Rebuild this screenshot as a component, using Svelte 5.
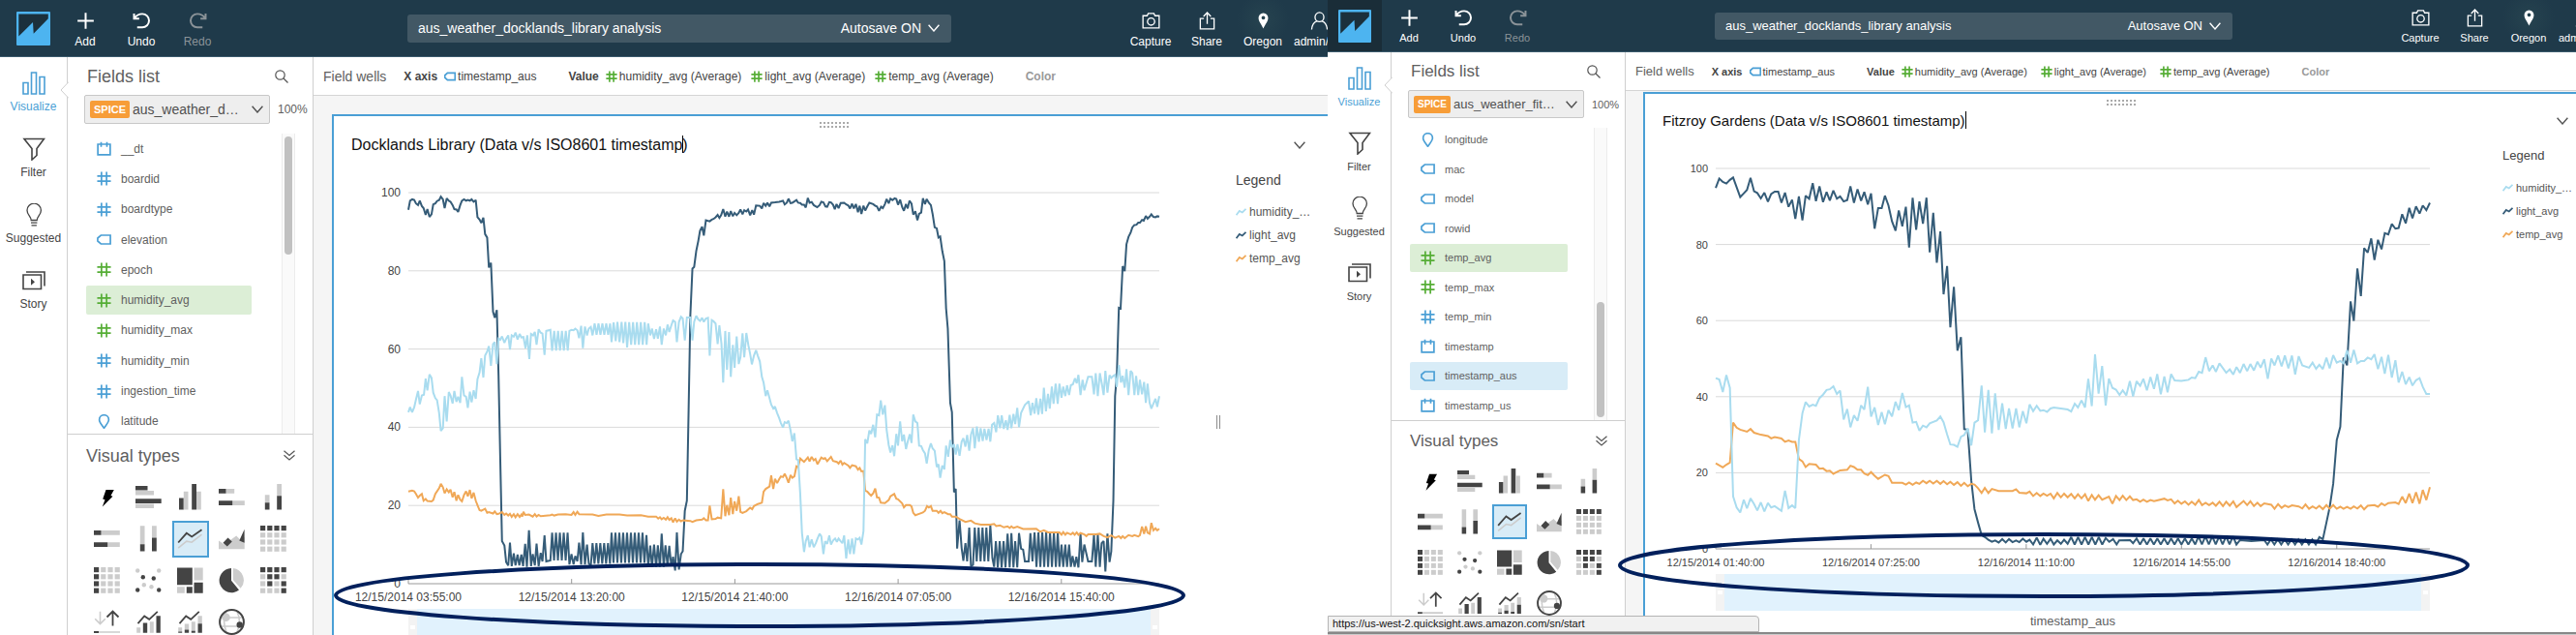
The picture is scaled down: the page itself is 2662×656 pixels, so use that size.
<script>
  // Builds a run of alternating high and low samples at a steady interval.
  function zig(from, to, high, low, step) {
    const out = [];
    let up = true;
    for (let x = from; x <= to; x += step) {
      out.push(`${x.toFixed(1)},${up ? high : low}`);
      up = !up;
    }
    return out.join(' ');
  }

  // Moves a run of samples along the time axis.
  function shift(dx, run) {
    return run
      .trim()
      .split(/\s+/)
      .map((p) => {
        const [x, y] = p.split(',').map(Number);
        return `${x + dx},${y}`;
      })
      .join(' ');
  }

  const docklandsLight = [
    '257,308 262,281 268,277 274,279 279,289 285,294 290,281 296,297 301,303 307,323 312,306 318,329 324,321 329,292 335,289 340,282 346,279 351,269 357,277 362,303 368,274 374,281 379,284 385,294 390,306 396,307 401,314 407,294 412,281 418,277 424,281 429,279 435,281 440,277 446,284 452,279 457,330 463,337 468,347 474,331 479,380 485,390 490,479 496,465 502,610 507,628 513,605 518,800 523,1050 528,1290 535,1303 540,1352 546,1362 551,1294 556,1364 562,1326 567,1362 573,1330 578,1362 584,1330 589,1364 595,1298 600,1366 606,1258 612,1364 617,1328 623,1362 628,1297 634,1364 640,1325 645,1350 651,1273 656,1350 668,1347',
    zig(673, 719, 1265, 1347, 5.6),
    '723,1359 729,1328 735,1359 740,1334 746,1350 751,1294 757,1359 762,1264 768,1359 774,1300 779,1356 785,1362',
    zig(790, 842, 1296, 1357, 5.6),
    zig(845, 942, 1265, 1354, 5.6),
    '946,1272 951,1366 957,1303 962,1366 968,1300 974,1366 979,1302 985,1366 990,1268 996,1366 1001,1302 1007,1364 1012,1304 1018,1364 1023,1336 1029,1377 1034,1264 1040,1374 1046,1328 1051,1320 1057,1200 1063,1170 1068,900 1073,620 1079,482 1084,477 1090,430 1096,400 1101,370 1107,358 1112,384 1118,339 1129,342 1135,337 1140,335 1146,330 1152,323 1157,332 1162,324 1168,306 1174,328 1179,313 1185,328 1190,312 1196,327 1201,317 1207,324 1213,317 1218,307 1224,321 1229,309 1235,313 1240,307 1246,324 1252,309 1257,322 1263,295 1274,296 1280,304 1285,288 1291,296 1296,287 1302,298 1307,287 1318,286 1330,284 1335,283 1341,281 1346,292 1352,287 1357,275 1363,288 1368,287 1374,283 1380,279 1385,287 1391,288 1396,293 1402,293 1407,301 1413,273 1418,287 1424,285 1430,294 1440,300 1447,294 1452,284 1458,286 1464,298 1469,299 1475,285 1480,286 1486,293 1491,306 1496,291 1502,303 1508,288 1518,287 1524,292 1530,295 1535,304 1541,290 1546,304 1552,291 1558,315 1563,296 1568,320',
    shift(
      1484,
      [
        '90,296 95,310 101,298 107,287 118,291 124,296 129,298 135,311 141,299 146,303 152,291 157,276 163,289 168,275 174,279 180,274 185,276 190,293 196,278 202,300 207,311 213,291 218,304 223,281 229,290 234,322 240,312 246,339 251,320 257,316 262,274 268,291 273,276 279,287 285,294 290,320 296,360 302,363 307,390 312,387 318,430 324,460 329,600 334,660 341,880 346,908 352,1145 357,1135 361,1312 368,1228 374,1310 379,1348 385,1296 390,1350 396,1250 401,1364 407,1360',
        zig(412, 455, 1250, 1350, 5.6),
        '457,1243 463,1340 468,1366',
        zig(473, 502, 1290, 1368, 5.6),
        '507,1268 513,1368 518,1266 524,1368 529,1290 535,1368 540,1266 546,1312 552,1315 557,1350 568,1350 573,1266 579,1350',
        zig(585, 653, 1264, 1366, 5.6),
        '657,1366 663,1300 668,1366 674,1300 679,1366 685,1300 690,1366 695,1334 701,1366 706,1336 712,1368 718,1268 723,1352 729,1300 740,1350 751,1350 757,1270 762,1366 768,1270 774,1366 779,1296 785,1290 790,1380 796,1268 802,1352 807,1320 813,1170 818,860 823,800 829,598 834,600 840,475 846,490 851,410 857,388 863,376 868,360 874,353 880,352 885,346 890,346 896,338 901,340 907,326 912,334 918,328 923,321 929,329 935,330 940,327 946,328'
      ].join(' ')
    )
  ].join(' ');

  const docklandsHumidity = [
    '257,908 262,893 268,908 274,893 279,870 285,845 290,884 296,858 302,856 307,808 312,843 318,796 324,806 329,850 335,866 340,872 346,910 351,963 357,955 362,860 368,935 374,848 379,858 385,882 390,845 396,877 401,862 407,880 412,803 418,858 424,862 429,895 435,847 440,878 446,843 452,868 457,810 463,790 468,748 474,805 479,740 485,728 490,712 496,770 502,706 507,700 513,765 518,690 523,693 528,683 535,702 540,690 546,680 551,722 556,680 562,684 567,672 573,692 579,676 584,686 590,685 596,718 601,680 607,750 612,676 618,680 623,670 628,708 634,662 640,672 645,675 651,738 656,667 668,664 673,726',
    zig(679, 720, 667, 725, 5.6),
    '723,667 729,664 735,665 740,660 746,665 751,688 757,652 762,718 768,654 774,680 779,660 785,655 790,680',
    zig(796, 842, 645, 678, 5.6),
    '845,700 851,642 857,697 862,640 868,700 874,640 879,703 885,640 890,716',
    zig(896, 948, 641, 708, 5.6),
    '951,645 957,680 962,660 968,690 974,662 979,690 985,654 990,708 996,660 1002,680 1007,648 1012,670 1018,650 1023,636 1029,640 1034,700 1040,640 1046,625 1051,630 1057,695 1063,627 1073,627 1079,695 1084,640 1090,622 1096,633 1101,637 1107,628 1112,640 1118,630 1124,628 1129,740 1135,635 1140,638 1146,645 1152,706 1157,650 1163,705 1168,820 1174,667 1179,782 1185,670 1190,803 1196,708 1201,776 1207,683 1213,765 1218,745 1224,674 1229,745 1235,673 1241,710 1246,735 1251,766 1257,740 1263,724 1268,740 1274,757 1280,803 1285,820 1291,860 1296,843 1302,866 1307,885 1313,897 1318,891 1324,910 1330,925 1335,940 1341,953 1346,937 1352,940 1357,933 1363,962 1368,994 1374,970 1380,1047 1385,1050 1391,1150 1396,1265 1402,1322 1407,1290 1413,1273 1418,1308 1424,1285 1430,1308 1436,1296 1441,1282 1447,1268 1452,1276 1458,1328 1463,1290 1469,1298 1475,1273 1480,1300',
    shift(
      1484,
      '2,1288 8,1282 13,1292 18,1282 24,1290 29,1296 34,1273 40,1341 46,1285 51,1328 57,1282 62,1328 68,1282 74,1285 79,1280 84,1300 90,1260 95,988 101,1000 107,962 112,972 118,945 124,982 129,915 135,917 140,873 146,915 152,887 157,960 163,1005 168,1027 174,1006 179,1038 185,972 190,1007 196,935 202,994 207,974 213,1017 218,995 224,973 229,999 234,915 240,935 246,940 251,1007 257,1008 262,1020 268,1030 273,1060 279,1020 285,1000 290,1015 296,1022 302,1070 307,1062 312,1102 318,1066 324,1077 329,1007 335,1040 341,990 346,1012 352,1003 357,1033 362,1003 368,1037 374,995 379,985 385,1010 390,975 396,1022 401,975 407,955 412,1015 418,950 424,995 429,955 435,993 440,957 446,990 452,957 457,995 462,945 468,940 474,967 479,917 485,955 490,917 496,957 502,932 507,960 513,916 518,955 524,913 529,943 535,895 540,952 546,910 557,886 568,875 574,917 579,880 585,912 590,866 596,915 602,868 607,913 612,835 618,905 624,853 629,897 635,832 640,883 646,823 652,883 657,823 663,865 668,832 674,860 679,828 685,857 690,828 696,825 702,807 707,822 712,797 718,857 724,812 729,843 740,803 751,803 757,855 762,792 768,860 774,792 780,825 785,857 790,785 796,850 802,798 807,806 813,800 818,797 823,833 829,768 835,820 840,800 846,835 851,780 857,857 863,785 868,792 874,857 879,800 885,857 890,812 896,855 902,818 907,880 912,823 918,880 923,897 935,868 940,892 946,860'
    )
  ].join(' ');

  const docklandsTemp = [
    '257,1143 268,1140 274,1142 279,1150 285,1161 290,1155 296,1150 301,1170 307,1165 312,1171 324,1172 329,1168 335,1150 346,1133 351,1120 357,1130 362,1148 368,1136 374,1145 379,1137 385,1160 390,1144 396,1170 401,1153 407,1167 412,1172 418,1153 424,1142 429,1157 435,1138 440,1163 446,1146 452,1170 457,1183 463,1198 468,1200 479,1194 485,1206 490,1204 502,1208 507,1202 513,1210 518,1209 528,1204 535,1212 540,1208 546,1214 551,1209 556,1218 562,1210 567,1219 573,1210 579,1218 584,1211 587,1217 590,1203 595,1212 606,1211 617,1217 623,1210 628,1217 634,1212 640,1216 668,1213 673,1211 679,1214 690,1211 712,1210 729,1212 735,1204 740,1212 746,1203 751,1210 790,1211 807,1215 830,1211 868,1211 890,1214 930,1213 951,1217 974,1217 980,1223 985,1219 990,1225 996,1221 1002,1226 1007,1219 1012,1227 1018,1222 1023,1234 1029,1222 1034,1232 1040,1226 1046,1231 1052,1228 1073,1230 1079,1233 1090,1228 1107,1226 1112,1222 1118,1228 1124,1228 1129,1185 1135,1225 1146,1224 1152,1220 1162,1222 1168,1136 1174,1216 1179,1183 1185,1213 1190,1161 1196,1210 1201,1172 1207,1200 1213,1157 1218,1203 1224,1206 1235,1201 1246,1191 1252,1195 1257,1186 1268,1180 1280,1176 1285,1143 1291,1135 1302,1128 1307,1095 1313,1135 1318,1105 1324,1118 1330,1106 1335,1098 1341,1100 1346,1090 1352,1103 1357,1117 1363,1094 1368,1102 1374,1098 1380,1068 1385,1070 1391,1045 1402,1055 1413,1042 1418,1053 1424,1040 1430,1050 1435,1046 1441,1062 1452,1042 1458,1046 1463,1044 1469,1053 1480,1040 1486,1052',
    shift(
      1484,
      '13,1055 18,1060 24,1051 29,1063 34,1058 46,1066 51,1073 57,1065 68,1068 74,1078 79,1073 84,1083 90,1082 95,1140 101,1143 107,1150 112,1155 118,1148 124,1134 129,1160 135,1161 140,1176 152,1177 163,1168 168,1157 179,1150 185,1164 190,1166 202,1178 207,1190 213,1183 224,1183 229,1187 234,1206 240,1213 251,1209 262,1205 268,1200 274,1186 279,1190 285,1186 290,1200 302,1200 307,1206 313,1200 318,1207 324,1204 335,1210 341,1210 346,1217 357,1217 368,1224 385,1233 401,1229 412,1237 430,1241 457,1241 468,1239 474,1245 485,1243 496,1249 507,1246 513,1251 518,1246 524,1251 535,1247 552,1254 590,1253 601,1262 612,1258 624,1264 657,1264 663,1271 668,1263 674,1271 679,1265 690,1270 696,1265 701,1271 707,1264 712,1271 718,1266 729,1270 735,1275 740,1270 762,1270 774,1268 785,1275 796,1279 807,1273 818,1280 829,1275 835,1281 840,1275 846,1281 857,1272 868,1275 874,1272 885,1276 890,1272 896,1247 902,1268 907,1246 912,1265 918,1268 923,1236 929,1258 935,1252 940,1258 946,1253'
    )
  ].join(' ');

  const fitzroyLight = [
    '278,241 289,213 300,223 311,228 322,217 332,210 354,268 364,258 375,247 386,211 397,251 407,256 418,272 429,255 440,282 450,259 461,252 472,252 482,285 493,255 504,297 515,276 525,333 536,266 547,337 557,264 568,273 579,227 589,280 600,236 611,283 622,253 632,278 643,249 654,273 664,266 675,281 686,277 696,236 707,285 718,245 729,279 739,253 750,290 760,257 771,362 782,301 793,301 803,264 814,293 825,340 836,368 846,308 857,355 868,297 878,418 889,270 900,365 910,281 921,347 932,270 942,432 953,315 964,463 975,370 985,557 996,473 1006,655 1017,535 1028,724 1039,684 1049,957 1060,960 1071,1110 1081,1195 1092,1235 1103,1272 1113,1278 1124,1286 1135,1292 1145,1288 1156,1294 1167,1284 1178,1294 1188,1284 1199,1293 1210,1288 1220,1293 1231,1283 1242,1292 1252,1286 1263,1300 1274,1280 1285,1301 1295,1283 1306,1298 1317,1283 1327,1300 1338,1288 1349,1298 1359,1286 1370,1298',
    zig(1381, 1480, 1278, 1300, 10.7),
    '1488,1281 1499,1292',
    shift(
      1440,
      [
        '71,1284 82,1300',
        '90,1288 124,1287 133,1296',
        zig(144, 330, 1282, 1300, 10.7),
        zig(336, 458, 1276, 1300, 10.7),
        '465,1287 500,1290 540,1287',
        zig(550, 702, 1300, 1285, 10.7),
        '711,1278 722,1284 733,1235 743,1190 754,1120 765,990 776,950 786,745 797,768 808,578 818,636 829,480 840,562 850,420 861,433 872,391 882,455 893,395 904,423 914,375 925,379 936,348 947,362 957,360 968,319 979,346 990,300 1000,331 1011,296 1022,317 1032,293 1043,307 1054,285'
      ].join(' ')
    )
  ].join(' ');

  const fitzroyHumidity = [
    '278,806 289,810 300,847 311,797 322,835 332,1157 343,1190 354,1205 365,1167 375,1193 386,1163 397,1180 407,1199 418,1175 429,1202 440,1177 450,1190 461,1186 482,1200 493,1140 504,1192 515,1184 525,1192 536,990 547,910 557,877 568,890 579,885 589,888 600,865 611,855 622,841 632,839 643,830 654,853 664,843 675,929 686,898 696,952 707,916 718,933 729,887 739,899 750,832 760,920 771,893 782,945 793,907 803,943 814,901 825,920 836,876 846,901 857,850 868,892 878,887 889,938 900,936 910,962 921,947 932,952 942,940 964,932 975,920 985,937 996,973 1006,1003 1017,1004 1028,1010 1039,980 1049,975 1060,955 1071,1006 1081,938 1092,931 1103,828 1113,967 1124,841 1135,970 1145,851 1156,960 1167,881 1178,957 1188,896 1199,955 1210,896 1220,952 1231,904 1242,940 1252,884 1263,904 1274,888 1285,903 1295,901 1306,906 1317,896 1327,893 1349,896 1370,899 1381,905 1392,882 1402,893 1413,872 1424,893 1434,808 1445,889',
    shift(
      1440,
      '15,735 26,852 37,770 48,887 58,807 69,835 80,840 91,856 101,842 112,857 123,815 133,860 144,815 155,829 165,808 176,842 187,803 198,838 208,794 219,854 230,801 240,848 251,794 262,813 283,814 305,811 315,804 326,806 337,787 347,790 358,744 369,785 380,768 390,787 401,762 422,790 433,780 444,795 454,773 465,790 476,764 487,785 497,764 508,783 519,757 529,775 540,750 551,808 562,748 572,768 583,739 594,771 604,739 615,777 626,739 636,795 647,741 658,768 679,775 690,760 701,778 711,766 722,779 733,745 743,777 754,738 765,760 776,755 786,762 797,723 808,760 818,722 829,762 840,755 850,755 861,745 872,750 882,735 893,779 904,743 914,793 925,737 936,804 947,753 957,819 968,787 979,824 990,803 1000,828 1011,812 1022,806 1032,832 1043,853 1054,853'
    )
  ].join(' ');

  const fitzroyTemp = [
    '278,1059 300,1071 311,1063 322,1057 332,938 343,953 354,959 375,965 386,957 397,968 418,974 440,978 450,985 461,981 482,985 493,995 504,991 515,995 525,995 536,1046 547,1053 557,1070 568,1061 589,1063 600,1075 611,1074 622,1082 632,1081 643,1090 664,1080 686,1078 696,1066 707,1070 718,1078 729,1078 739,1089 750,1094 760,1085 771,1096 782,1105 803,1093 814,1097 825,1117 857,1117 868,1122 878,1116 889,1123 900,1116 910,1120 921,1111 932,1118 942,1111 953,1119 964,1111 975,1120 985,1112 996,1121 1006,1114 1017,1123 1028,1115 1039,1126 1049,1117 1060,1127 1071,1120 1081,1122 1092,1133 1103,1147 1113,1132 1124,1147 1135,1135 1156,1141 1199,1141 1210,1136 1220,1146 1242,1148 1252,1143 1263,1156 1274,1147 1285,1156 1295,1149 1306,1155 1317,1149 1327,1163 1338,1147 1349,1160 1359,1149 1370,1160 1381,1150 1392,1163 1402,1151 1413,1163 1424,1151 1434,1171',
    shift(
      1440,
      '5,1153 15,1167 26,1154 37,1167 58,1158 69,1179 80,1156 91,1168 101,1155 112,1168 123,1157 133,1168 144,1166 155,1173 165,1167 176,1173 187,1168 198,1171 230,1164 240,1169 251,1166 262,1178 272,1170 283,1179 294,1172 305,1182 315,1173 326,1182 337,1168 347,1183 358,1176 369,1183 380,1176 390,1185 401,1173 412,1186 422,1173 433,1185 444,1172 454,1189 476,1171 487,1183 497,1172 508,1186 519,1176 529,1186 540,1178 562,1182 572,1194 583,1180 594,1191 604,1184 615,1189 626,1184 647,1187 658,1193 668,1181 679,1194 690,1187 701,1193 711,1185 722,1195 733,1183 743,1194 754,1183 765,1194 776,1188 786,1194 797,1188 808,1194 818,1187 829,1193 840,1184 850,1196 861,1185 882,1183 893,1188 904,1178 914,1184 925,1177 947,1175 957,1180 968,1158 979,1177 990,1149 1000,1177 1011,1145 1022,1179 1032,1138 1043,1168 1054,1130'
    )
  ].join(' ');

  const windows = [
    {
      id: 'docklands',
      dataset: 'aus_weather_d…',
      title: ['Docklands Library (Data v/s ISO8601 timestamp', ')'],
      fields: [
        ['date', 'blue', '__dt'],
        ['hash', 'blue', 'boardid'],
        ['hash', 'blue', 'boardtype'],
        ['tag', 'blue', 'elevation'],
        ['hash', 'green', 'epoch'],
        ['hash', 'green', 'humidity_avg', 'measure'],
        ['hash', 'green', 'humidity_max'],
        ['hash', 'blue', 'humidity_min'],
        ['hash', 'blue', 'ingestion_time'],
        ['pin', 'blue', 'latitude']
      ],
      box: { x: 257, y: 257, w: 2173, h: 1159 },
      times: ['12/15/2014 03:55:00', '12/15/2014 13:20:00', '12/15/2014 21:40:00', '12/16/2014 07:05:00', '12/16/2014 15:40:00'],
      lines: [['light', docklandsLight], ['temp', docklandsTemp], ['humidity', docklandsHumidity]],
      splitter: true
    },
    {
      id: 'fitzroy',
      dataset: 'aus_weather_fit…',
      title: ['Fitzroy Gardens (Data v/s ISO8601 timestamp)', ''],
      fields: [
        ['pin', 'blue', 'longitude'],
        ['tag', 'blue', 'mac'],
        ['tag', 'blue', 'model'],
        ['tag', 'blue', 'rowid'],
        ['hash', 'green', 'temp_avg', 'measure'],
        ['hash', 'green', 'temp_max'],
        ['hash', 'blue', 'temp_min'],
        ['date', 'blue', 'timestamp'],
        ['tag', 'blue', 'timestamp_aus', 'dimension'],
        ['date', 'blue', 'timestamp_us']
      ],
      box: { x: 278, y: 183, w: 2216, h: 1130 },
      times: ['12/15/2014 01:40:00', '12/16/2014 07:25:00', '12/16/2014 11:10:00', '12/16/2014 14:55:00', '12/16/2014 18:40:00'],
      lines: [['light', fitzroyLight], ['temp', fitzroyTemp], ['humidity', fitzroyHumidity]],
      axisTitle: 'timestamp_aus',
      link: 'https://us-west-2.quicksight.aws.amazon.com/sn/start'
    }
  ];

  const measures = ['humidity_avg (Average)', 'light_avg (Average)', 'temp_avg (Average)'];
  const legend = [['humidity', 'humidity_…'], ['light', 'light_avg'], ['temp', 'temp_avg']];
  const visuals = ['auto', 'hbar', 'vbar', 'hstack', 'vstack', 'hfull', 'vfull', 'line', 'area', 'table', 'pivot', 'scatter', 'tree', 'pie', 'heat', 'kpi', 'combo', 'combostack', 'geo'];
  const cells = { table: '1111000000000000', pivot: '1000100010001000', heat: '1111011001010001' };
  const rail = ['Visualize', 'Filter', 'Suggested', 'Story'];
</script>

{#snippet fieldIcon(kind, tone)}
  <svg class="ficon {tone}" viewBox="0 0 16 16" aria-hidden="true">
    {#if kind === 'hash'}
      <path d="M5.2 .5v15M10.8 .5v15M.5 5.2h15M.5 10.8h15" />
    {:else if kind === 'tag'}
      <path d="M4.600 3.200h10.400v9.600H4.600L1 9.600V6.400z" />
    {:else if kind === 'date'}
      <path d="M1.200 3.200h13.600v11.600H1.200zM4.800 .8v5.400M11.200 .8v5.400" />
    {:else}
      <path d="M8 15.200C5.400 11.400 2.800 9 2.800 6a5.200 5.200 0 0 1 10.400 0c0 3-2.600 5.400-5.200 9.200z" />
    {/if}
  </svg>
{/snippet}

{#snippet chevron()}
  <svg class="chev" viewBox="0 0 12 8" aria-hidden="true"><path d="M.6 .8 6 7 11.4 .8" /></svg>
{/snippet}

{#snippet railIcon(name)}
  <svg class="ricon" viewBox="0 0 24 24" aria-hidden="true">
    {#if name === 'Visualize'}
      <path d="M1 11.500h5v11.500H1zM9.500 1h5v22h-5zM18 5.500h5v17.500h-5z" />
    {:else if name === 'Filter'}
      <path d="M2 1.500h20.500L15 11.500v7l-5 4.500V11.500z" />
    {:else if name === 'Suggested'}
      <path class="fine" d="M9.200 17.500c0-4-4.200-5.500-4.200-10.300a7.200 7 0 0 1 14.400 0c0 4.800-4.200 6.300-4.200 10.300zM9 20.200h6.400M9.500 22.800h5.400" />
    {:else}
      <path d="M1 6h18.500v14.500H1zM4 3h19v14.500" />
      <path class="solid" d="M9 9.700l4 3.500-4 3.500z" />
    {/if}
  </svg>
{/snippet}

{#snippet toolIcon(name)}
  <svg class="ticon" viewBox="0 0 20 20" aria-hidden="true">
    {#if name === 'Add'}
      <path class="bold" d="M10 1.200v17.600M1.200 10h17.600" />
    {:else if name === 'Undo'}
      <path class="bold" d="M1.600 2v5.600h5.600M2 7.200C4.200 4 7 2.500 10.600 2.500a7.300 7.300 0 0 1 0 14.600H5" />
    {:else if name === 'Redo'}
      <path class="bold" d="M18.400 2v5.600h-5.600M18 7.200C15.800 4 13 2.500 9.400 2.500a7.300 7.300 0 0 0 0 14.600H15" />
    {:else if name === 'Capture'}
      <path d="M1.200 4.500h4.500l1.200-2.500h6.200l1.200 2.500h4.500V17.800H1.200z" />
      <circle cx="10" cy="10.800" r="3.900" />
    {:else if name === 'Share'}
      <path d="M6.500 7.500h-4V18.800h15V7.500h-4M10 13.500V1.500M6 5.200l4-4.200 4 4.200" />
    {:else if name === 'Oregon'}
      <path class="fill" fill-rule="evenodd" d="M10 1.500a5.200 5.200 0 0 1 5.200 5.400c0 4-3.200 7-5.200 11.600-2-4.600-5.200-7.600-5.200-11.600A5.200 5.200 0 0 1 10 1.500zm0 3.200a2 2 0 1 0 0 4 2 2 0 0 0 0-4z" />
    {:else}
      <path d="M10 1a4.800 5 0 0 1 0 10 4.800 5 0 0 1 0-10zM1.500 19.500c.5-5 2.500-7.800 5.600-9M18.500 19.500c-.5-5-2.500-7.800-5.600-9" />
    {/if}
  </svg>
{/snippet}

{#snippet visualIcon(name)}
  <svg class="vicon" viewBox="0 0 27 27" aria-hidden="true">
    {#if name === 'auto'}
      <path fill="#000" d="M12.500 6h8.300l-3.300 6 2 .8L8.800 23.500l2.700-7.300-2.300-.7z" />
    {:else if name === 'hbar'}
      <path class="d" d="M0 2h12.500v4.500H0zM0 15.200h26.700V20H0z" /><path class="l" d="M0 7h19v4.500H0zM0 20.500h19V25H0z" />
    {:else if name === 'vbar'}
      <path class="d" d="M2 14.500h4.800v12H2zM15.200 0H20v26.500h-4.800z" /><path class="l" d="M6.800 7.800h4.700v18.700H6.800zM20 7.800h4.800v18.700H20z" />
    {:else if name === 'hstack'}
      <path class="l" d="M7.500 5h8.700v4.800H7.500zM14.200 17.200h12.600V22H14.200z" /><path class="d" d="M0 5h7.500v4.800H0zM0 17.200h14.200V22H0z" />
    {:else if name === 'vstack'}
      <path class="l" d="M4.800 11.200h4.700v8H4.800zM17.200 0H22v12.200h-4.800z" /><path class="d" d="M4.800 19.200h4.700v7.300H4.800zM17.200 12.200H22v14.300h-4.800z" />
    {:else if name === 'hfull'}
      <path class="l" d="M7.500 5h19.300v4.800H7.500zM14.200 17.200h12.600V22H14.200z" /><path class="d" d="M0 5h7.500v4.800H0zM0 17.200h14.200V22H0z" />
    {:else if name === 'vfull'}
      <path class="l" d="M4.800 .3h4.700v19H4.800zM17 .3h4.800v12.200H17z" /><path class="d" d="M4.800 19.200h4.700v7.300H4.800zM17 12.500h4.800v14H17z" />
    {:else if name === 'line'}
      <path class="ls" d="M1.200 23.200l8.600-7 5.400 1 10.300-8" /><path class="ds" d="M1.200 17.500l8.600-9.700 5.400 3.700 10.300-7.300" />
    {:else if name === 'area'}
      <path class="l" d="M0 15.500l5.800 4L18.200 10.500l4.300 4.300 4.200-2.800v12.200H0z" /><path class="d" d="M9.500 12.500l4.300 4-5 5-4.300-3.700zM26.600 3.800v14l-5.300-2.300z" />
    {:else if cells[name]}
      {#each cells[name].split('') as c, i}
        <rect class={c === '1' ? 'd' : 'l'} x={(i % 4) * 7.2} y={Math.floor(i / 4) * 7.2} width="5.2" height="5.2" />
      {/each}
    {:else if name === 'scatter'}
      {#each [[2.2, 3.5], [24.2, 3.5], [8.8, 18.2], [16.5, 20.2]] as [x, y]}<circle class="l" cx={x} cy={y} r="2.2" />{/each}
      {#each [[7.8, 10.2], [18.8, 11.5], [2.2, 23.5], [24.2, 23.5]] as [x, y]}<circle class="d" cx={x} cy={y} r="2.2" />{/each}
    {:else if name === 'tree'}
      <path class="d" d="M0 .5h15.800v17.700H0zM9.800 20.200h6v6.600h-6zM17.500 15.800h9.200v11h-9.200z" /><path class="l" d="M17.500 .5h9.200v13h-9.200zM0 20.200h7.800v6.600H0z" />
    {:else if name === 'pie'}
      <path class="d" d="M13 1v12.800l8 9.700A12.600 12.600 0 1 1 13 1z" /><path class="l" d="M14.800 1a12.500 12.500 0 0 1 7.800 20.800L14.800 13z" />
    {:else if name === 'kpi'}
      <path class="ls" d="M6.500 2.800v12.500M1.200 10.200l5.300 5.300 5.300-5.300M5 24h22" /><path class="ds" d="M19.500 17.500v-15M13.500 8.500l6-6 6 6M0 24h5" />
    {:else if name === 'combo'}
      <path class="l" d="M1.200 19.200h4v5.600h-4zM14.800 13.200h4v11.600h-4z" /><path class="d" d="M7.800 14.500h4.400v10.300H7.800zM21.500 7.200h4.300v17.600h-4.300z" /><path class="ds" d="M2.500 15.200l6.700-7.700 5 3.300 8.600-8" />
    {:else if name === 'combostack'}
      <path class="l" d="M1.200 19.200h4v4.300h-4zM7.800 15.500h4.400v6H7.800zM14.800 13.200h4v10h-4zM21.500 7.200h4.300v8h-4.300z" /><path class="d" d="M1.200 23.500h4v1.300h-4zM7.800 21.500h4.400v3.300H7.800zM14.800 22.800h4v2h-4zM21.500 15.200h4.300v9.600h-4.300z" /><path class="ds" d="M2.500 15.200l6.700-7.700 5 3.300 8.600-8" />
    {:else}
      <path class="ls" d="M8 3c-3 6-3 14 0 21M19 3c3 6 3 14 0 21M3 9h21M2.500 18h22" />
      <circle class="l" cx="7.5" cy="8.8" r="4.3" /><circle class="d" cx="21.7" cy="16.5" r="3.2" /><circle class="ring" cx="13.5" cy="13.5" r="12.4" />
    {/if}
  </svg>
{/snippet}

<div class="desk">
  {#each windows as win}
    <section class="window {win.id}" aria-label={win.title.join('')}>
      <header>
        <a class="logo" href="#start" aria-label="Start">
          <svg viewBox="0 0 35 35" aria-hidden="true">
            <rect width="35" height="35" rx="1" fill="#4db4f0" />
            <path fill="#1b303c" d="M2.300 2.500H32.800V7.300L17.700 22.700 17 11 2.300 25.500z" />
          </svg>
        </a>
        <button class="tool">{@render toolIcon('Add')}Add</button>
        <button class="tool">{@render toolIcon('Undo')}Undo</button>
        <button class="tool off">{@render toolIcon('Redo')}Redo</button>
        <div class="name">
          <input aria-label="Analysis name" value="aus_weather_docklands_library analysis" />
          <button>Autosave ON {@render chevron()}</button>
        </div>
        <button class="tool">{@render toolIcon('Capture')}Capture</button>
        <button class="tool">{@render toolIcon('Share')}Share</button>
        <button class="tool glow">{@render toolIcon('Oregon')}Oregon</button>
        <button class="tool admin">{@render toolIcon('admin')}admin/</button>
      </header>

      <div class="body">
        <nav class="rail">
          {#each rail as item, i}
            <button class:on={i === 0}>{@render railIcon(item)}{item}</button>
          {/each}
          <svg class="notch" viewBox="0 0 9 18" aria-hidden="true"><path d="M9 .5 1 9l8 8.500" /></svg>
        </nav>

        <aside>
          <div class="phead">
            <h2>Fields list</h2>
            <button aria-label="Search fields">
              <svg class="search" viewBox="0 0 14 14" aria-hidden="true"><circle cx="5.5" cy="5.5" r="4.7" /><path d="M9 9l4.500 4.500" /></svg>
            </button>
          </div>
          <div class="source">
            <label class="pick">
              <span class="badge">SPICE</span>
              <select aria-label="Data set"><option>{win.dataset}</option></select>
              {@render chevron()}
            </label>
            <span class="pct">100%</span>
          </div>
          <div class="fields">
            <ul>
              {#each win.fields as [kind, tone, label, mark]}
                <li class={mark}>{@render fieldIcon(kind, tone)}{label}</li>
              {/each}
            </ul>
            <div class="track"><i></i></div>
          </div>
          <div class="types">
            <div class="thead">
              <h2>Visual types</h2>
              <button aria-label="Collapse visual types">
                <svg class="fold" viewBox="0 0 12 11" aria-hidden="true"><path d="M.5 .8 6 5.500l5.500-4.700M.5 5.300 6 10l5.500-4.700" /></svg>
              </button>
            </div>
            <div class="grid">
              {#each visuals as v}
                <button class:sel={v === 'line'} aria-label={v}>{@render visualIcon(v)}</button>
              {/each}
            </div>
          </div>
        </aside>

        <main>
          <div class="wells">
            <span class="wtitle">Field wells</span>
            <b>X axis</b>
            <span class="well first">{@render fieldIcon('tag', 'blue')}timestamp_aus</span>
            <b class="group">Value</b>
            {#each measures as m, i}
              <span class="well" class:first={i === 0}>{@render fieldIcon('hash', 'green')}{m}</span>
            {/each}
            <b class="group dim">Color</b>
          </div>

          <div class="sheet">
            <article>
              <div class="grip"></div>
              <div class="ctitle">
                <h3>{win.title[0]}<i class="caret"></i>{win.title[1]}</h3>
                <button aria-label="Visual menu">{@render chevron()}</button>
              </div>
              <div class="chart">
                <div class="yaxis">
                  {#each [100, 80, 60, 40, 20, 0] as v}<span>{v}</span>{/each}
                </div>
                <div class="plot">
                  <svg class="lines" viewBox="{win.box.x} {win.box.y} {win.box.w} {win.box.h}" preserveAspectRatio="none" role="img" aria-label={win.title.join('')}>
                    {#each [0, 1, 2, 3, 4] as g}
                      <path class="gl" d="M{win.box.x} {win.box.y + (g * win.box.h) / 5}h{win.box.w}" />
                    {/each}
                    {#each win.times as _, t}
                      <path class="axis" d="M{win.box.x + t * 0.2174 * win.box.w} {win.box.y + win.box.h - 14}v14" />
                    {/each}
                    <path class="axis" d="M{win.box.x} {win.box.y + win.box.h}h{win.box.w}" />
                    {#each win.lines as [name, points]}
                      <polyline class={name} {points} />
                    {/each}
                  </svg>
                  <div class="times">
                    {#each win.times as t}<span>{t}</span>{/each}
                  </div>
                  <div class="range"><i></i><em></em><i></i></div>
                  {#if win.axisTitle}<div class="atitle">{win.axisTitle}</div>{/if}
                  <svg class="ring-note" aria-hidden="true"><ellipse cx="50%" cy="50%" rx="50%" ry="50%" /></svg>
                </div>
                <div class="split">{#if win.splitter}<i></i>{/if}</div>
                <div class="legend">
                  <h4>Legend</h4>
                  {#each legend as [name, label]}
                    <p>
                      <svg viewBox="0 0 11 8" aria-hidden="true"><path class={name} d="M.5 7.200 3.800 3l3 1.500L10.500 .8" /></svg>{label}
                    </p>
                  {/each}
                </div>
              </div>
            </article>
          </div>
        </main>
      </div>
      {#if win.link}
        <div class="edge"></div>
        <div class="status">{win.link}</div>
      {/if}
    </section>
  {/each}
</div>

<style>
  :global(body) { margin: 0; background: #fff; }
  h2, h3, h4, p, ul { margin: 0; padding: 0; font-weight: 400; }
  i, em { font-style: normal; }
  button, input, select {
    font: inherit; color: inherit; background: none; border: 0; padding: 0; margin: 0;
  }
  svg { display: block; flex: none; fill: none; stroke: currentColor; }

  .desk {
    display: grid;
    grid-template-columns: 1372fr 1290fr;
    height: 100vh;
    overflow: hidden;
    font-family: "Liberation Sans", Arial, sans-serif;
    color: #444;
  }
  .window {
    position: relative; min-width: 0; overflow: hidden;
    display: flex; flex-direction: column;
    background: #fff;
    font-size: var(--small); line-height: 16px;
  }
  .docklands {
    --small: 12px; --mid: 14px; --large: 18px; --title: 16px; --badge: 11px;
    --head: 59px; --logo: 35px; --tool: 58px; --toolpad: 12px; --toolgap: 4px;
    --namel: 188px; --namer: 177px; --nameh: 29px; --admin: 35px;
    --rail: 70px; --railtop: 10px; --railrow: 68px; --notch: 25px;
    --side: 254px; --pick: 192px; --pickh: 30px; --listh: 310px; --rows: 313px; --scroll: 0px;
    --thumb: 3px; --thumbh: 122px; --mark: 171px;
    --thead: 43px; --cellw: 43px; --cellh: 43px; --vicon: 27px; --sel: 38px;
    --wellgap: 10px; --groupgap: 33px; --sheet: 19px; --sheetx: 19px; --bleed: -6px;
    --ctitle: 20px; --axisw: 77px; --plottop: 39px; --ploth: 404px; --splitw: 79px; --legw: 101px;
    --notel: -75px; --noter: -25px; --notetop: 384px;
  }
  .fitzroy {
    --small: 11px; --mid: 13px; --large: 17px; --title: 15px; --badge: 10px;
    --head: 54px; --logo: 34px; --tool: 56px; --toolpad: 9px; --toolgap: 3px;
    --namel: 176px; --namer: 166px; --nameh: 28px; --admin: 18px;
    --rail: 66px; --railtop: 10px; --railrow: 67px; --notch: 25px;
    --side: 242px; --pick: 182px; --pickh: 29px; --listh: 302px; --rows: 305px; --scroll: -3px;
    --thumb: 180px; --thumbh: 119px; --mark: 163px;
    --thead: 41px; --cellw: 41px; --cellh: 42px; --vicon: 26px; --sel: 36px;
    --wellgap: 14px; --groupgap: 33px; --sheet: 1px; --sheetx: 18px; --bleed: -21px;
    --ctitle: 18px; --axisw: 73px; --plottop: 39px; --ploth: 393px; --splitw: 75px; --legw: 97px;
    --notel: -99px; --noter: -39px; --notetop: 378px;
  }

  header {
    box-sizing: border-box; height: var(--head); flex: none;
    display: flex; align-items: stretch;
    background: #1f3a4a; color: #fff; border-bottom: 1px solid #3a5a6c;
  }
  .logo { width: 59px; display: flex; align-items: center; justify-content: center; flex: none; }
  .logo svg { width: var(--logo); height: var(--logo); stroke: none; }
  .docklands .logo { padding-left: 5px; margin-right: -5px; }
  .fitzroy .logo { width: 56px; background: #1a2d38; }
  .tool {
    width: var(--tool); flex: none; display: flex; flex-direction: column; align-items: center;
    padding-top: var(--toolpad); gap: var(--toolgap);
  }
  .off { color: #8b9398; }
  .ticon { width: 19px; height: 19px; stroke-width: 1.4; }
  .ticon .bold { stroke-width: 2.1; }
  .ticon .fill { fill: #fff; stroke: none; }
  .glow { background: radial-gradient(circle at 50% 35%, #26434f, #1f3a4a 27px); }
  .admin { width: var(--admin); margin-left: 3px; align-items: flex-start; white-space: nowrap; }
  .admin .ticon { margin-left: 17px; }
  .name {
    flex: 1; min-width: 0; height: var(--nameh); align-self: center;
    display: flex; align-items: center; box-sizing: border-box; padding: 0 12px 0 11px;
    margin: 0 var(--namer) 0 var(--namel);
    background: #425865; border-radius: 3px; font-size: var(--mid);
  }
  .name input { flex: 1; min-width: 0; outline: 0; }
  .name button { display: flex; align-items: center; gap: 7px; }
  .chev { width: 12px; height: 8px; stroke-width: 1.4; }

  .body { flex: 1; min-height: 0; display: grid; grid-template-columns: var(--rail) var(--side) minmax(0, 1fr); }
  .rail { position: relative; border-right: 1px solid #cfcfcf; padding-top: var(--railtop); }
  .rail button {
    width: 100%; height: var(--railrow); display: flex; flex-direction: column; align-items: center;
    padding-top: 5px; gap: 4px; box-sizing: border-box;
  }
  .rail .on { color: #4a9fd5; }
  .ricon { width: 24px; height: 24px; stroke-width: 1.6; }
  .ricon .fine { stroke-width: 1.3; }
  .solid { fill: currentColor; stroke: none; }
  .notch { position: absolute; right: -2px; top: var(--notch); width: 9px; height: 18px; fill: #fff; stroke: #cfcfcf; }

  aside { display: flex; flex-direction: column; min-height: 0; border-right: 1px solid #cfcfcf; }
  h2 { font-size: var(--large); line-height: 22px; color: #606060; }
  .phead { height: 39px; display: flex; align-items: center; justify-content: space-between; padding: 0 25px 0 20px; }
  .search { width: 14px; height: 14px; stroke: #555; stroke-width: 1.2; }
  .source { display: flex; align-items: center; gap: 8px; padding-left: 17px; color: #606060; white-space: nowrap; }
  .pick {
    width: var(--pick); height: var(--pickh); box-sizing: border-box; flex: none;
    display: flex; align-items: center; gap: 3px; padding: 0 6px 0 5px;
    background: #eee; border: 1px solid #c8c8c8; border-radius: 2px; color: #505050;
  }
  .badge {
    flex: none; background: #f79d38; color: #fff; font-weight: 700; font-size: var(--badge); line-height: 18px;
    padding: 0 4px; border-radius: 2px;
  }
  .pick select { appearance: none; flex: 1; min-width: 0; font-size: var(--mid); outline: 0; }
  .fields { position: relative; margin-top: 10px; height: var(--listh); flex: none; display: flex; overflow: hidden; }
  ul {
    list-style: none; display: grid; grid-auto-rows: 1fr; box-sizing: border-box;
    height: var(--rows); width: var(--mark); margin: var(--scroll) 0 0 19px;
  }
  li { display: flex; align-items: center; gap: 10px; padding-left: 11px; margin: 1px 0; border-radius: 2px; color: #606060; }
  .measure { background: #dceed6; }
  .dimension { background: #d8ecf7; }
  .ficon { width: 15px; height: 15px; stroke-width: 1.8; }
  .blue { stroke: #4a9fd5; }
  .green { stroke: #55ad35; }
  .track {
    width: 12px; margin-left: auto; margin-right: 18px; box-sizing: content-box;
    background: #fafafa; border: solid #ececec; border-width: 0 1px;
  }
  .track i {
    display: block; width: 8px; height: var(--thumbh); margin: var(--thumb) auto 0; border-radius: 4px; background: #c1c1c1;
  }
  .types { flex: 1; min-height: 0; overflow: hidden; border-top: 1px solid #cfcfcf; }
  .thead { height: var(--thead); display: flex; align-items: center; justify-content: space-between; padding: 0 18px 0 19px; }
  .fold { width: 12px; height: 11px; stroke: #555; stroke-width: 1.2; }
  .grid { display: grid; grid-template-columns: repeat(5, var(--cellw)); grid-auto-rows: var(--cellh); padding-left: 19px; }
  .grid button {
    width: var(--sel); height: var(--sel); place-self: center; box-sizing: border-box;
    display: flex; align-items: center; justify-content: center; border: 2px solid transparent;
  }
  .grid .sel { background: #d8ecf7; border-color: #4a9fd5; }
  .vicon { width: var(--vicon); height: var(--vicon); stroke: none; }
  .vicon .d { fill: #444; }
  .vicon .l { fill: #ccc; }
  .vicon .ds { stroke: #444; stroke-width: 1.8; }
  .vicon .ls { stroke: #ccc; stroke-width: 1.6; }
  .vicon .ring { stroke: #444; stroke-width: 2; }

  main { display: flex; flex-direction: column; min-width: 0; min-height: 0; }
  .wells {
    box-sizing: border-box; height: 40px; flex: none; display: flex; align-items: center;
    padding-left: 10px; border-bottom: 1px solid #d5d5d5; white-space: nowrap;
  }
  .wtitle { font-size: var(--mid); color: #606060; margin-right: 18px; }
  .well { display: flex; align-items: center; gap: 2px; margin-left: var(--wellgap); }
  .well.first { margin-left: 7px; }
  .well .ficon { width: 12px; height: 12px; stroke-width: 2.2; }
  .group { margin-left: var(--groupgap); }
  .dim { color: #999; }
  .sheet {
    flex: 1; min-height: 0; display: flex; background: #f5f5f5;
    padding: var(--sheet) 0 0 var(--sheetx);
  }
  article {
    position: relative; flex: 1; min-width: 0; margin-right: var(--bleed);
    background: #fff; border: 2px solid #4a9fd5; border-bottom: 0; border-right: 0;
  }
  .grip {
    position: absolute; top: 5px; left: 50%; margin-left: -16px; width: 32px; height: 8px;
    background: radial-gradient(circle at 2px 2px, #aaa 1px, transparent 1.5px) 0 0 / 4px 4px;
  }
  .ctitle { display: flex; align-items: center; justify-content: space-between; padding: var(--ctitle) 29px 0 18px; height: 20px; }
  h3 { font-size: var(--title); line-height: 20px; color: #111; white-space: nowrap; display: flex; }
  .caret { width: 1px; height: 18px; background: #000; }
  .docklands .caret { margin-right: -1px; }
  .ctitle .chev { stroke: #555; }
  .chart { display: flex; }
  .yaxis {
    width: var(--axisw); height: var(--ploth); margin-top: var(--plottop); box-sizing: border-box; padding-right: 8px;
    display: flex; flex-direction: column; justify-content: space-between; align-items: flex-end; flex: none;
  }
  .yaxis span { height: 0; line-height: 0; }
  .plot { position: relative; flex: 1; min-width: 0; padding-top: var(--plottop); }
  .lines { width: 100%; height: var(--ploth); overflow: visible; }
  .lines path, .lines polyline { vector-effect: non-scaling-stroke; }
  .gl { stroke: #dadada; stroke-width: 1; }
  .axis { stroke: #999; stroke-width: 1; }
  polyline { stroke-width: 2; stroke-linejoin: miter; stroke-miterlimit: 2; }
  .light { stroke: #355c78; }
  .temp { stroke: #f0a857; }
  .humidity { stroke: #a9dcef; }
  .times {
    display: grid; grid-template-columns: repeat(5, 21.74%); margin: 6px 0 4px -10.87%;
    width: 100%; text-align: center; white-space: nowrap;
  }
  .range { height: 38px; display: flex; background: #e1f2fd; }
  .range i { width: 9px; background: #f3f3f3; display: flex; align-items: center; justify-content: center; }
  .range i::after { content: ''; width: 5px; height: 4px; background: #fff; }
  .range em { flex: 1; }
  .atitle { text-align: center; font-size: var(--mid); margin-top: 3px; color: #606060; }
  .ring-note {
    position: absolute; z-index: 2; overflow: visible; pointer-events: none;
    left: var(--notel); top: calc(var(--notetop) + var(--plottop)); height: 64px;
    width: calc(100% - var(--notel) - var(--noter)); stroke: #02205c; stroke-width: 4;
  }
  .split { width: var(--splitw); flex: none; box-sizing: border-box; padding: 269px 0 0 59px; }
  .split i { display: block; width: 2px; height: 14px; border: solid #8c8c8c; border-width: 0 1px; }
  .legend { width: var(--legw); flex: none; padding-top: 16px; white-space: nowrap; }
  h4 { font-size: var(--mid); line-height: 20px; margin-bottom: 11px; }
  .legend p { height: 24px; display: flex; align-items: center; gap: 3px; color: #555; }
  .legend svg { width: 11px; height: 8px; stroke-width: 1.8; }

  .edge { flex: none; height: 1px; background: #ccc; border-top: 2px solid #888; }
  .status {
    position: absolute; left: 0; bottom: 3px; box-sizing: border-box; width: 446px; height: 17px; padding-left: 4px;
    background: #f1f1f1; border: 1px solid #b4b4b4; border-top-right-radius: 4px;
    font: 11px/15px "Liberation Sans", Arial, sans-serif; color: #111; white-space: nowrap;
  }
</style>
